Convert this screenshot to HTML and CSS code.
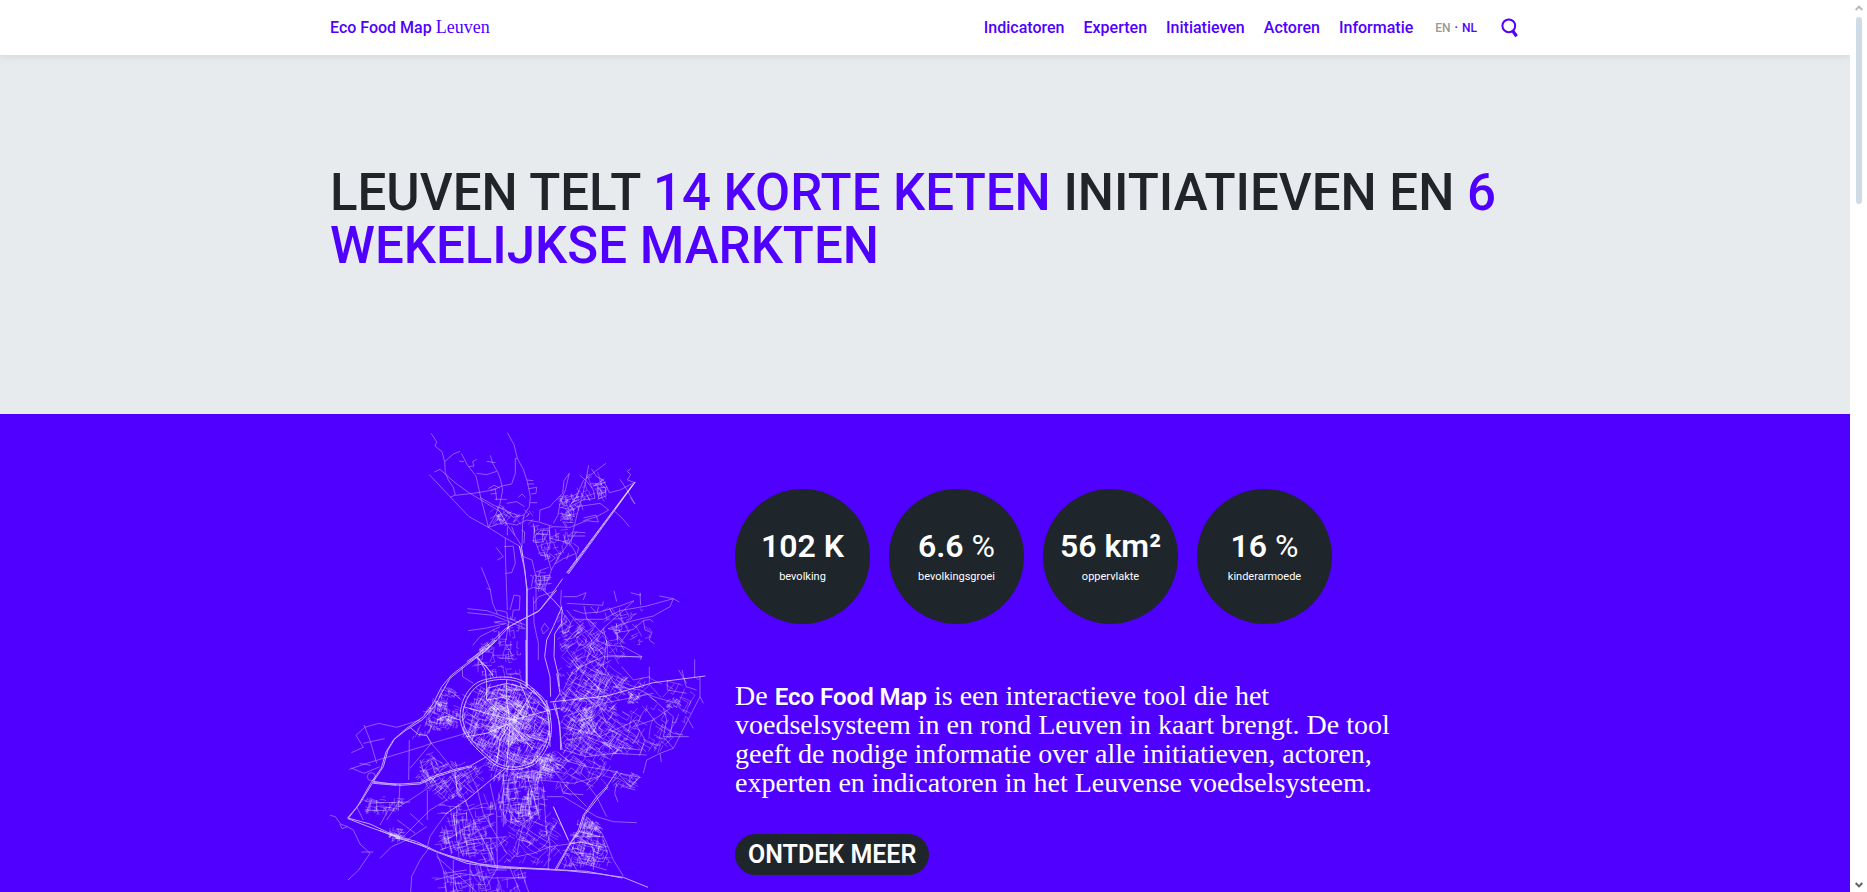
FILE: index.html
```html
<!DOCTYPE html>
<html lang="nl">
<head>
<meta charset="utf-8">
<title>Eco Food Map Leuven</title>
<link rel="stylesheet" href="styles.css">
</head>
<body>
<div class="page">
  <header class="site-header">
    <div class="container header-row">
      <a class="brand" href="#">Eco Food Map <span class="brand-city">Leuven</span></a>
      <div class="header-tools">
        <nav class="main-nav">
          <a href="#">Indicatoren</a>
          <a href="#">Experten</a>
          <a href="#">Initiatieven</a>
          <a href="#">Actoren</a>
          <a href="#">Informatie</a>
        </nav>
        <div class="languages"><a class="lang-off" href="#">EN</a><span>·</span><a href="#">NL</a></div>
        <button class="search" type="button" aria-label="Zoeken">
          <svg width="18" height="20" viewBox="0 0 18 20" fill="none" stroke="currentColor"><circle cx="7.8" cy="7.8" r="6.4" stroke-width="2"/><path d="M11.6 12.8 15.6 18.2" stroke-width="3.2"/></svg>
        </button>
      </div>
    </div>
  </header>
  <main>
    <section class="hero">
      <div class="container">
        <h1>LEUVEN TELT <em>14 KORTE KETEN</em> INITIATIEVEN EN <em>6 WEKELIJKSE MARKTEN</em></h1>
      </div>
    </section>
    <section class="intro">
      <div class="container intro-row">
        <svg class="map" viewBox="30 66 1131 1500" role="img" aria-label="Stratenkaart van Leuven">
          <g id="streets" class="streets"></g>
          <g class="roads">
            <path d="M333 70 350 95 345 108 366 125 374 155 376 188 385 210 400 232 406 255 390 262M374 155 400 132 420 124M343 186 360 178 405 218 445 247 520 292 540 305M406 256 460 250 520 240 545 228 575 222 586 190 586 145M328 194 390 260 447 320 505 352 556 384 598 408"/>
            <path d="M424 130 442 165 468 198 474 225 482 262 500 330 505 352M417 153 432 155M446 170 462 168 458 155 470 148M470 190 500 194 530 184M511 136 518 160 534 188 542 210 548 240 540 280 528 312 505 352M500 154 526 158"/>
            <path d="M562 68 582 104 592 145 610 178 622 215 631 260 628 290 612 315 608 340 606 410M586 145 592 145M620 210 640 212M622 222 642 222M626 236 650 232 648 250 634 252M631 278 652 278"/>
            <path d="M480 262 520 285 555 300 580 322 612 315M505 352 550 338 590 345 620 330 656 336 700 350 750 352 800 332 835 336 828 315 790 324M540 305 565 350 590 384 606 410M540 285 562 305 600 318M560 280 590 275 614 290M595 262 606 252 616 262"/>
            <path d="M505 236 522 226 540 234M512 240 526 236 530 270M524 268 560 268M512 252 530 250M562 350 562 376M575 350 585 376M604 360 614 366 612 400"/>
            <path d="M748 190 732 212 728 250 700 278 690 290 660 300 658 334M748 190 736 240 720 280 714 315 700 340M806 166 798 210 786 262 772 310 758 368 752 404 768 430 770 454M858 160 826 184 790 212 768 262 746 292"/>
            <path d="M814 176 830 200 850 210 868 248 900 240 946 216M780 196 800 214 820 240 825 265 790 270 745 292M772 290 840 280 866 300 830 320 790 332M830 235 856 232 858 258 836 266 832 240M842 236 846 264M832 250 858 248M720 292 760 300M718 310 765 320M728 336 760 338"/>
            <path d="M932 176 922 184 932 194 922 210 945 218M900 208 920 238 945 282 930 262M882 302 906 324 928 350M744 378 796 378M744 378 760 366 796 368"/>
            <path d="M688 346 690 400 680 430 690 466 694 480 680 520 672 540M640 340 648 400 662 436 690 440M770 364 746 400 720 392 688 384M746 400 716 440 694 480M746 430 740 448M768 430 730 446 704 462M760 400 776 412 772 430"/>
            <path d="M644 350 640 396 670 396 686 360 660 362 640 384M668 362 668 396M650 372 686 374M688 430 706 444 690 456"/>
            <path d="M556 384 556 420 558 490 562 600M552 410 580 408 586 460 575 488 556 490M528 412 550 440 532 450M484 472 510 536 518 580 532 612M500 534 512 540M598 408 610 440 636 450 648 500 648 600M648 486 686 472M650 500 686 496M652 512 684 510M652 524 680 522M662 498 660 530M674 496 672 530M630 495 640 500 634 530"/>
            <path d="M442 596 500 602 552 620 616 645M442 608 520 616 570 636 616 656M445 662 500 654 560 640M458 706 480 680 540 650M530 600 560 606 566 640 556 700 580 740M620 540 640 532 672 538M582 555 600 558 598 600 580 600 575 630M582 555 570 600M640 560 642 640 655 700 655 750M642 580 656 560 700 545"/>
            <path d="M724 540 722 580 726 600M730 560 770 560 798 548 790 570M740 580 848 586 850 574M760 600 790 610 840 606 900 588 942 572 910 602 880 628 850 655 830 690 800 714M882 542 890 575M932 548 962 556 960 548M960 552 962 586M792 588 800 625 820 640M812 590 830 610 836 590"/>
            <path d="M764 628 850 628 900 602 980 588 1060 566 1050 590 1000 618 940 632 864 656M1018 558 1060 566 1078 576M864 656 910 665 940 658 970 632 990 628 1000 636M970 632 975 660 995 668 988 690 1004 702M740 600 772 640 830 690 860 705 910 710 966 740 960 750M850 655 862 705 862 750M890 640 888 670 914 700M930 660 900 700 912 720M800 625 850 672"/>
            <path d="M725 640 736 616 752 640 744 666 728 670ZM664 656 674 640 686 656 670 672ZM770 684 784 672 800 686 794 704 776 706ZM730 690 760 684 790 650M730 700 790 640M860 735 966 742"/>
          </g>
          <g class="roads major">
            <path d="M942 220 742 490M946 216 745 492M938 224 740 488M670 540 700 570 727 600 724 640 704 672 702 740 716 800 718 830M598 408 612 470 622 540 622 830M604 408 616 490 620 540 618 830M728 506 690 560 655 605 600 632 556 656 510 700 450 750"/>
            <path d="M726 590 700 650 680 690 674 740 690 800 692 860M710 540 660 600 568 650 515 705 440 755"/>
          </g>
          <g transform="translate(0 690)">
            <g class="roads">
              <path d="M30 526 46 530 62 552 82 560 100 570 120 612 150 640 116 690 84 720M82 560 66 566 60 552M94 338 130 322 108 286 134 262 176 250 230 262 300 240M132 255 150 300 170 370M130 310 194 296M88 388 140 370 200 352 300 322 334 310 420 285 450 275M94 384 132 400 180 380M118 370 152 376M142 410a12 12 0 1 0 24 0a12 12 0 1 0 -24 0"/>
              <path d="M268 300 266 420M334 310 300 350 270 385M334 310 360 340 400 390M332 360 345 400M300 360 312 400M372 140 400 160 424 180M426 80 428 110 460 130M330 620 300 660 275 710 272 756M350 640 370 690 380 756M124 636 160 636M180 655 215 620 260 600 320 560"/>
              <path d="M240 430 236 500 270 480 330 440 380 420M200 540 240 480M216 490 180 555M250 590 330 510 380 480M270 520 310 556M232 540 286 580M322 450 322 540M380 520 350 560 330 590 322 620M110 500 130 540M135 484 190 488 270 486M135 510 200 512M150 480 150 515M170 480 170 512"/>
              <path d="M345 720 420 700 520 714 620 712M350 650 430 720 470 756M372 700 440 690M400 660 400 756M450 670 450 756M480 675 500 756M534 680 500 740M570 684 600 756M590 650 640 640 690 620 760 610M590 650 598 600 610 550M600 684 626 756M500 690 560 690"/>
              <path d="M680 470 730 470 780 500 830 530 880 545 950 548M700 390 740 440 800 500M730 360 800 380 890 395M740 400 820 440M660 420 700 424 760 430 840 408M670 440 680 590M720 430 730 460 790 464M840 408 800 430 830 470 860 530"/>
              <path d="M960 412 930 440 890 395M960 412 900 400M890 430 884 460 894 486M920 420 950 430M910 440 946 450M940 400 926 430M970 400 980 360 1020 340 1060 325 1140 170 1140 110M1060 325 1030 290 1040 240 1030 205 980 160 940 180M1020 340 1024 366M1030 290 1106 290M980 210 1010 250 1060 280"/>
              <path d="M1086 90 1098 140 1130 150M1076 90 1100 130M1124 58 1124 112M1140 170 1150 190M1042 120 1042 150 1100 160M988 80 988 130M905 80 940 120 990 110M1100 230 1120 265M1060 280 1090 285M940 240 975 300 960 340M940 260 1000 240 1050 205M880 140 960 150 1000 170 1070 190M1030 205 1060 230 1050 290"/>
              <path d="M730 330 800 350 880 340 980 345M740 300 800 290 880 320 960 330M730 230 850 190 1000 160M740 260 840 290 950 240M830 180 860 250 940 300M760 200 830 280 870 320M800 160 870 230 950 290M730 150 760 90 850 50 966 50M740 120 800 60 816 0M860 0 850 80 890 140M700 500 750 612M740 30 800 110 850 160M720 160 740 190"/>
              <path d="M800 530 846 580 860 610 880 660 910 708M800 530 790 590 850 590M790 600 780 640 800 660 850 666 862 640 850 600M750 612 790 670 860 690M740 640 770 690M820 620 820 690M800 600 830 640M600 550 640 580 690 610M560 500 600 556 650 520M540 500 560 540 600 560M680 570 690 610 684 690"/>
              <path d="M410 500 410 600 430 650M430 470 470 560 520 660M470 440 490 520 560 640M510 430 530 520 532 690M380 600 440 560 520 520M360 630 450 600 560 590M550 400 550 560M580 395 590 460M620 400 640 470 660 540"/>
            </g>
            <g class="roads major">
              <path d="M420 240C418 180 450 125 500 118 550 104 600 110 632 140 670 170 690 190 692 240 702 290 680 340 644 372 590 400 540 390 510 362 470 330 430 290 420 240Z"/>
              <path d="M428 240C426 186 456 134 504 124 550 112 600 118 628 146 664 174 682 196 686 240 694 290 672 336 638 366 590 390 546 384 516 358 476 326 436 286 428 240Z"/>
              <path d="M530 0 500 30 440 70 395 105 365 140 340 190 310 230 260 265 225 295 204 330 190 380 160 425 120 490 82 535"/>
              <path d="M525 0 495 34 436 78 390 115 370 150 344 200 306 240 256 272 220 300 198 336 184 384 152 430 112 500 85 535"/>
              <path d="M160 428 240 432 300 428 350 405 405 388 450 378 500 350M160 424 240 436 300 432 350 410 405 392 456 380M160 430 230 436"/>
              <path d="M84 534 150 552 220 585 290 605 350 634 430 662 520 680 620 686 740 692 840 702 910 712 984 742M84 536 150 562 230 590 300 615 350 636 440 670 540 684 660 686 800 694 908 714M180 572 240 596 320 620M380 645 480 672 560 680 690 688"/>
              <path d="M704 690 750 610 775 570 790 525 830 470 860 440 892 392M708 692 752 610 780 570 794 525 834 474 864 440M750 612 780 606 850 622M775 574 840 590"/>
              <path d="M470 50 520 105M474 52 496 90 500 130M466 50 500 80 520 110M650 155 690 215M640 150 684 206M680 180 688 260 690 320M700 190 716 240 726 330M706 190 720 260 722 330M690 186 860 168 1000 128 1156 108M690 210 720 204M620 140 618 0"/>
              <path d="M350 240 380 228 420 240M270 262 296 284 320 286 334 310M404 392 412 455 425 470M376 522 440 480 500 430 555 386M700 500 745 600M400 525 410 590M500 130 500 180 550 220 600 250M430 200 500 220 580 240 690 210M560 120 560 180 570 250 560 380M600 130 640 220 690 250M700 190 720 160 710 100"/>
              <path d="M500 145 560 130 620 145M520 150 600 150M570 250 540 300 530 370M570 250 640 330M440 290 500 280 570 250M640 150 580 250M540 160 620 240M500 180 560 170"/>
            </g>
          </g>
        </svg>
        <div class="intro-text">
          <ul class="stats">
            <li><strong>102 K</strong><span>bevolking</span></li>
            <li><strong>6.6 <i>%</i></strong><span>bevolkingsgroei</span></li>
            <li><strong>56 km²</strong><span>oppervlakte</span></li>
            <li><strong>16 <i>%</i></strong><span>kinderarmoede</span></li>
          </ul>
          <p class="lead">De <b>Eco Food Map</b> is een interactieve tool die het voedselsysteem in en rond Leuven in kaart brengt. De tool geeft de nodige informatie over alle initiatieven, actoren, experten en indicatoren in het Leuvense voedselsysteem.</p>
          <a class="more" href="#">ONTDEK MEER</a>
        </div>
      </div>
    </section>
  </main>
</div>
<div class="scrollbar" aria-hidden="true">
  <svg width="8" height="6" viewBox="0 0 8 6" fill="none" stroke="#b9b9b9" stroke-width="2"><path d="M0.7 5 4 1.6 7.3 5"/></svg>
  <div class="thumb"></div>
  <svg class="down" width="8" height="6" viewBox="0 0 8 6" fill="none" stroke="#606060" stroke-width="2"><path d="M0.7 1 4 4.4 7.3 1"/></svg>
</div>
<script src="map.js"></script>
</body>
</html>
```
FILE: styles.css
```css
* { box-sizing: border-box; }

body {
  margin: 0;
  height: 100vh;
  display: flex;
  overflow: hidden;
  background: #fff;
  color: #212529;
  font-family: Roboto, "Liberation Sans", sans-serif;
}

a { color: inherit; text-decoration: none; }

.page { flex: 1; min-width: 0; overflow: hidden; }

.container { width: 100%; max-width: 1190px; margin: 0 auto; }

.site-header {
  position: relative;
  background: #fff;
  color: #5000ff;
  box-shadow: 0 2px 8px rgba(0, 0, 0, 0.08);
}

.header-row {
  display: flex;
  align-items: center;
  justify-content: space-between;
  height: 55px;
}

.brand { font-size: 16px; font-weight: 500; }
.brand-city { font-family: "Liberation Serif", serif; font-size: 18px; font-weight: 400; }

.header-tools { display: flex; align-items: center; padding-right: 1px; }
.main-nav { display: flex; gap: 19px; font-size: 16px; font-weight: 500; }

.languages {
  display: flex;
  gap: 4px;
  margin-left: 22px;
  font-size: 12px;
  font-weight: 500;
}
.lang-off { color: #999; }

.search {
  display: flex;
  margin-left: 24px;
  padding: 1px 0 0;
  border: 0;
  background: none;
  color: inherit;
}

.hero { padding: 111px 0 142px; background: #e7ebee; }

h1 { margin: 0; font-size: 51px; line-height: 53px; font-weight: 500; }
h1 em { color: #5000ff; font-style: normal; }

.intro { background: #5000ff; color: #fff; }
.intro-row { display: flex; align-items: flex-start; gap: 28px; padding-top: 18px; }

.map { flex: none; width: 377px; height: 500px; }
.map path { fill: none; stroke: #fff; }
.streets { stroke-width: 2; stroke-opacity: 0.42; }
.roads { opacity: 0.55; stroke-width: 2; }
.roads.major { opacity: 0.65; stroke-width: 3; }

.intro-text { padding-top: 57px; }

.stats { display: flex; gap: 19px; margin: 0; padding: 0; list-style: none; }
.stats li {
  display: flex;
  flex-direction: column;
  align-items: center;
  width: 135px;
  height: 135px;
  padding-top: 38px;
  border-radius: 50%;
  background: #1e252b;
}
.stats strong { font-size: 32px; line-height: 38px; font-weight: 600; }
.stats i { font-style: normal; font-weight: 400; }
.stats span { margin-top: 5px; font-size: 11px; line-height: 14px; }

.lead {
  max-width: 680px;
  margin: 57px 0 37px;
  font-family: "Liberation Serif", serif;
  font-size: 28px;
  line-height: 29px;
}
.lead b { font-family: Roboto, "Liberation Sans", sans-serif; font-size: 24px; font-weight: 600; line-height: 24px; }

.more {
  display: inline-block;
  padding: 0 13px;
  border-radius: 21px;
  background: #1e252b;
  font-size: 25px;
  line-height: 41px;
  font-weight: 600;
}

.scrollbar {
  flex: none;
  display: flex;
  flex-direction: column;
  align-items: center;
  gap: 6px;
  width: 17px;
  padding: 5px 0 4px;
}
.thumb { width: 6px; height: 187px; border-radius: 3px; background: #d0dce5; }
.down { margin-top: auto; }
```
FILE: map.js
```js
// Fills the built-up districts with small streets around the main roads.
// Each district: outline, main street direction in degrees, street count, block size.
const districts = [
  [[[430,860],[500,815],[625,825],[685,900],[685,990],[640,1060],[520,1050],[430,970]], 25, 480, 13],
  [[[500,880],[620,860],[640,980],[560,1010],[500,960]], 40, 260, 9],
  [[[725,860],[760,780],[850,750],[930,800],[880,900],[930,1010],[850,1040],[730,1020]], 35, 370, 13],
  [[[770,890],[820,890],[830,970],[780,970]], 55, 80, 7],
  [[[930,800],[1130,800],[1130,880],[1040,1010],[900,1030],[880,900]], 30, 80, 14],
  [[[540,620],[615,620],[615,800],[500,800],[460,760]], 85, 65, 11],
  [[[720,600],[850,640],[920,740],[720,800]], 50, 125, 11],
  [[[850,590],[1000,600],[990,700],[860,720]], 65, 40, 10],
  [[[350,830],[410,830],[420,950],[340,960],[280,980],[320,900]], 20, 100, 9],
  [[[355,915],[400,915],[395,945],[350,945]], 20, 40, 6],
  [[[350,870],[375,870],[375,900],[350,900]], 20, 25, 6],
  [[[280,1090],[330,1020],[400,1050],[500,1060],[480,1140],[370,1170]], 50, 140, 11],
  [[[500,1040],[730,1030],[720,1100],[520,1110]], 20, 130, 11],
  [[[700,1020],[890,1040],[860,1130],[720,1150]], 35, 50, 14],
  [[[530,1090],[670,1080],[670,1190],[610,1250],[540,1230]], 3, 190, 12],
  [[[640,1050],[700,1020],[720,1070],[690,1090]], 30, 80, 7],
  [[[370,1180],[530,1160],[530,1360],[360,1310]], 80, 120, 15],
  [[[540,1230],[700,1200],[740,1300],[680,1360],[540,1350]], 35, 75, 13],
  [[[775,1220],[840,1240],[870,1360],[720,1370]], 15, 140, 9],
  [[[350,1380],[620,1380],[620,1490],[380,1490]], 78, 80, 16],
  [[[130,1160],[250,1160],[240,1200],[130,1210]], 5, 40, 9],
  [[[205,1255],[250,1255],[250,1290],[205,1290]], 15, 40, 6],
  [[[720,260],[790,240],[790,300],[730,350]], 70, 55, 9],
  [[[640,340],[790,350],[700,460],[650,420]], 80, 42, 10],
  [[[790,190],[860,200],[860,265],[790,265]], 70, 28, 10],
  [[[510,280],[640,300],[640,345],[520,345]], 50, 30, 8],
  [[[530,310],[555,310],[555,330],[530,330]], 40, 24, 5],
  [[[645,480],[690,480],[690,540],[645,540]], 0, 20, 8],
  [[[925,845],[955,845],[955,878],[925,878]], 40, 36, 6],
  [[[1040,865],[1080,865],[1080,890],[1040,890]], 40, 28, 6],
  [[[475,700],[505,695],[505,715],[480,720]], 40, 24, 5],
  [[[790,1220],[830,1235],[840,1262],[795,1250]], 20, 40, 7],
  [[[870,1080],[965,1090],[940,1140],[880,1120]], 30, 24, 9]
];

let seed = 7;
function random() {
  seed = (seed * 16807) % 2147483647;
  return seed / 2147483647;
}

function inside(x, y, outline) {
  let hit = false;
  for (let i = 0, j = outline.length - 1; i < outline.length; j = i++) {
    const [xi, yi] = outline[i];
    const [xj, yj] = outline[j];
    if ((yi > y) !== (yj > y) && x < (xj - xi) * (y - yi) / (yj - yi) + xi) hit = !hit;
  }
  return hit;
}

// One path per street, so that crossings and dense blocks come out brighter.
const layer = document.getElementById("streets");
for (const [outline, degrees, count, block] of districts) {
  const xs = outline.map(p => p[0]);
  const ys = outline.map(p => p[1]);
  const left = Math.min(...xs), width = Math.max(...xs) - left;
  const top = Math.min(...ys), height = Math.max(...ys) - top;
  let made = 0;
  while (made < count) {
    let x = left + random() * width;
    let y = top + random() * height;
    if (!inside(x, y, outline)) continue;
    made++;
    let angle = (degrees + (random() < 0.5 ? 90 : 0) + (random() - 0.5) * 30) * Math.PI / 180;
    let d = `M${x.toFixed(0)} ${y.toFixed(0)}`;
    const steps = 2 + Math.floor(random() * 3);
    for (let s = 0; s < steps; s++) {
      const length = block * (0.5 + random());
      x += Math.cos(angle) * length;
      y += Math.sin(angle) * length;
      d += `L${x.toFixed(0)} ${y.toFixed(0)}`;
      if (!inside(x, y, outline)) break;
      angle += random() < 0.25 ? Math.PI / 2 : (random() - 0.5) * 0.4;
    }
    const path = document.createElementNS("http://www.w3.org/2000/svg", "path");
    path.setAttribute("d", d);
    layer.appendChild(path);
  }
}
```
